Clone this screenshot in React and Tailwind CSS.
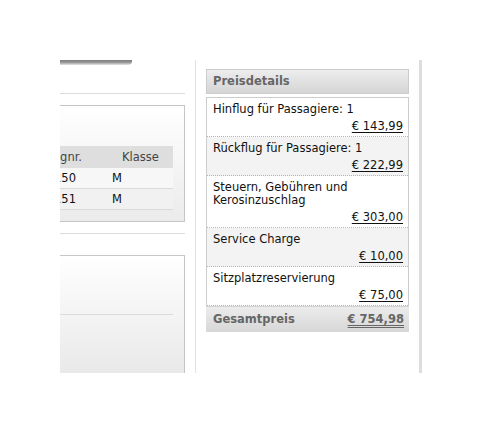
const priceRows = [
  { label: ['Hinflug für Passagiere: 1'], price: '€ 143,99', shaded: false },
  { label: ['Rückflug für Passagiere: 1'], price: '€ 222,99', shaded: true },
  { label: ['Steuern, Gebühren und', 'Kerosinzuschlag'], price: '€ 303,00', shaded: false },
  { label: ['Service Charge'], price: '€ 10,00', shaded: true },
  { label: ['Sitzplatzreservierung'], price: '€ 75,00', shaded: false },
];

const flights = [
  { nr: 'LH 4150', klasse: 'M', bg: 'bg-[#f7f7f7]' },
  { nr: 'LH 4151', klasse: 'M', bg: 'bg-[#f1f1f1]' },
];

const App = () => {
  return (
    <div className="w-[482px] h-[434px] bg-white flex pt-[60px] pl-[60px] font-['DejaVu_Sans',Verdana,sans-serif] text-[11.5px] text-[#111]">
      {/* left column, cut off at the left edge */}
      <div className="w-[125px] h-[313px] overflow-hidden flex flex-col">
        <div className="h-[5px] w-[72px] rounded-br-[4px] bg-gradient-to-b from-[#7c7c7c] via-[#9a9a9a] to-[#e6e6e6]" />
        <div className="h-px bg-[#dcdcdc] mt-[28px]" />

        <div className="mt-[11px] h-[117px] border border-l-0 border-[#c6c6c6] bg-gradient-to-b from-white to-[#ebebeb] pt-[40px] pr-[11px]">
          <div className="flex h-[22px] items-center bg-[#dedede] text-[#444] leading-[13px]">
            <div className="w-[48px] whitespace-nowrap">
              <span className="ml-[-17px]">Flugnr.</span>
            </div>
            <div className="flex-1 text-center">Klasse</div>
          </div>
          {flights.map((f) => (
            <div key={f.nr} className={`flex h-[21px] items-center border-b border-[#dadada] leading-[13px] ${f.bg}`}>
              <div className="w-[48px] whitespace-nowrap">
                <span className="ml-[-32px]">{f.nr}</span>
              </div>
              <div className="flex-1 pl-[4px]">{f.klasse}</div>
            </div>
          ))}
        </div>

        <div className="h-px bg-[#dcdcdc] mt-[11px]" />

        <div className="mt-[21px] flex-1 border-t border-r border-[#c6c6c6] bg-gradient-to-b from-white to-[#e9e9e9] pt-[58px] pr-[11px]">
          <div className="h-px bg-[#dcdcdc]" />
        </div>
      </div>

      <div className="ml-[10px] w-px h-[313px] bg-[#e2e2e2]" />

      {/* Preisdetails */}
      <div className="ml-[10px] w-[203px] pt-[9px]">
        <div className="h-[25px] flex items-center px-[6px] border border-[#cccccc] bg-gradient-to-b from-[#ededed] to-[#d5d5d5] font-bold text-[#666]">
          Preisdetails
        </div>
        <div className="mt-[3px] border border-b-0 border-[#cccccc]">
          {priceRows.map((row) => (
            <div
              key={row.price}
              className={`pl-[6px] pr-[5px] pt-[5px] pb-[3px] border-b border-dotted border-[#b5b5b5] leading-[13px] ${row.shaded ? 'bg-[#f3f3f3]' : 'bg-white'}`}
            >
              {row.label.map((l) => (
                <div key={l}>{l}</div>
              ))}
              <div className="mt-[4px] text-right">
                <span className="underline underline-offset-[2px]">{row.price}</span>
              </div>
            </div>
          ))}
        </div>
        <div className="h-[26px] flex items-center justify-between pl-[7px] pr-[5px] border-t border-[#d4d4d4] bg-gradient-to-b from-[#ececec] to-[#d7d7d7] font-bold text-[#666]">
          <span>Gesamtpreis</span>
          <span className="underline decoration-double underline-offset-[2px]">€ 754,98</span>
        </div>
      </div>

      <div className="ml-[10px] w-[3px] h-[313px] bg-[#dddddd]" />
    </div>
  );
};

export default App;
